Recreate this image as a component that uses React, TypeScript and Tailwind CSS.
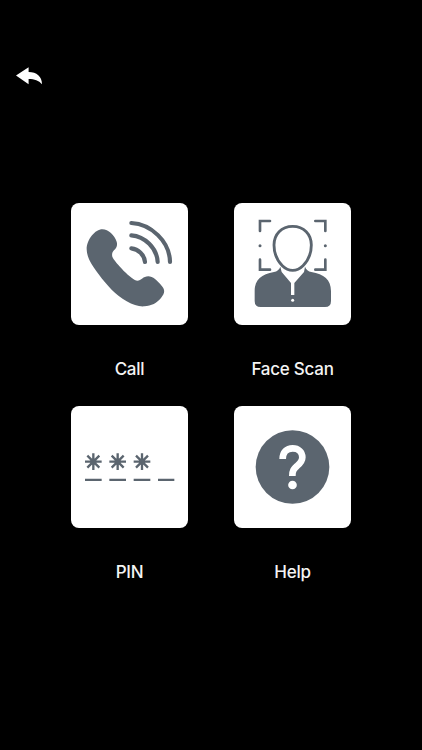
import React from 'react';

interface Tile {
  label: string;
  icon: React.ReactNode;
}

const INK = '#5b656f';

const BackArrow = () => (
  <svg viewBox="0 0 28 18" className="block h-[18px] w-7" fill="#fff">
    <path d="M0 8.6 12.6.2V5C20.6 5.2 26 9.2 26 17.3 22.7 13.4 18.6 12 12.6 12V17.3Z" />
  </svg>
);

const CallIcon = () => (
  <svg viewBox="18 15 351 366" className="size-full" fill="none">
    <path
      fill={INK}
      d="M112 94C91 94 65 124 65 154C65 179 83 205 101 229C126 263 152 291 185 310C204 321 221 326 238 325C259 324 276 315 288 300C299 286 301 277 291 265C277 247 263 235 250 235C234 235 229 248 217 248C202 248 149 193 142 176C140 168 142 162 147 157C155 149 158 142 155 131C149 112 130 94 112 94Z"
    />
    <g stroke={INK} strokeWidth={12.5} strokeLinecap="round">
      <path d="M199 75C258 78 314 130 315 192" />
      <path d="M199 112C239 115 276 150 278 192" />
      <path d="M199 151C220 153 238 170 240 192" />
    </g>
  </svg>
);

const FaceScanIcon = () => (
  <svg viewBox="18 15 351 366" className="size-full" fill="none">
    {/* viewfinder corners */}
    <path
      stroke={INK}
      strokeWidth={8}
      strokeLinecap="round"
      strokeLinejoin="miter"
      d="M96 99V69H126M262 69H292V99M292 185V215H262M126 215H96V185"
    />
    <circle cx={96} cy={143} r={4.5} fill={INK} />
    <circle cx={292} cy={143} r={4.5} fill={INK} />
    {/* shoulders */}
    <path
      fill={INK}
      d="M157 206L161 222L189 255V291H199V255L228 222L231 206C234 215 241 220 250 222C288 229 309 244 309 279V309Q309 327 291 327H98Q80 327 80 309V279C80 244 101 229 138 222C147 220 154 215 157 206Z"
    />
    <circle cx={194} cy={307} r={4.5} fill="#fff" />
    {/* head */}
    <path
      fill="#fff"
      stroke={INK}
      strokeWidth={8.5}
      d="M194 85C160 85 138 109 138 141C138 166 149 189 163 203C173 213 183 217 194 217C205 217 215 213 225 203C239 189 250 166 250 141C250 109 228 85 194 85Z"
    />
  </svg>
);

const PinIcon = () => (
  <svg viewBox="18 18 351 366" className="size-full" fill="none" stroke={INK}>
    {[85, 158, 231].map((x) => (
      <g key={x} transform={`translate(${x} 185)`}>
        <path strokeWidth={7} d="M-25 0H25M0-25V25M-18-18 18 18M-18 18 18-18" />
        <circle r={9} fill={INK} stroke="none" />
      </g>
    ))}
    <path strokeWidth={6.5} d="M60 239.5H110M133 239.5H183M206 239.5H256M279 239.5H328" />
  </svg>
);

const HelpIcon = () => (
  <svg viewBox="18 18 351 366" className="size-full" fill="none">
    <circle cx={193.5} cy={201} r={110.5} fill={INK} />
    <path
      stroke="#fff"
      strokeWidth={20}
      d="M164 177C164 157 176 145 194 145C211 145 223 156 223 172C223 184 217 190 207 198C198 206 193 211 193 228"
    />
    <circle cx={193.5} cy={255} r={13} fill="#fff" />
  </svg>
);

const tiles: Tile[] = [
  { label: 'Call', icon: <CallIcon /> },
  { label: 'Face Scan', icon: <FaceScanIcon /> },
  { label: 'PIN', icon: <PinIcon /> },
  { label: 'Help', icon: <HelpIcon /> },
];

export default function App() {
  return (
    <div className="min-h-screen bg-black font-['Inter','Liberation_Sans',sans-serif] text-white">
      <header className="px-4 pt-[67px]">
        <button type="button" aria-label="Back" className="block">
          <BackArrow />
        </button>
      </header>
      <main className="mt-[118px] grid grid-cols-[117px_117px] justify-center gap-x-[46px] gap-y-[17px]">
        {tiles.map((tile) => (
          <button key={tile.label} type="button" className="flex h-[186px] flex-col items-center">
            <span className="block h-[122px] w-[117px] overflow-hidden rounded-lg bg-white">{tile.icon}</span>
            <span className="mt-8 text-[17px] leading-6 font-medium tracking-[-0.25px] whitespace-nowrap text-[#f4f4f4]">
              {tile.label}
            </span>
          </button>
        ))}
      </main>
    </div>
  );
}
